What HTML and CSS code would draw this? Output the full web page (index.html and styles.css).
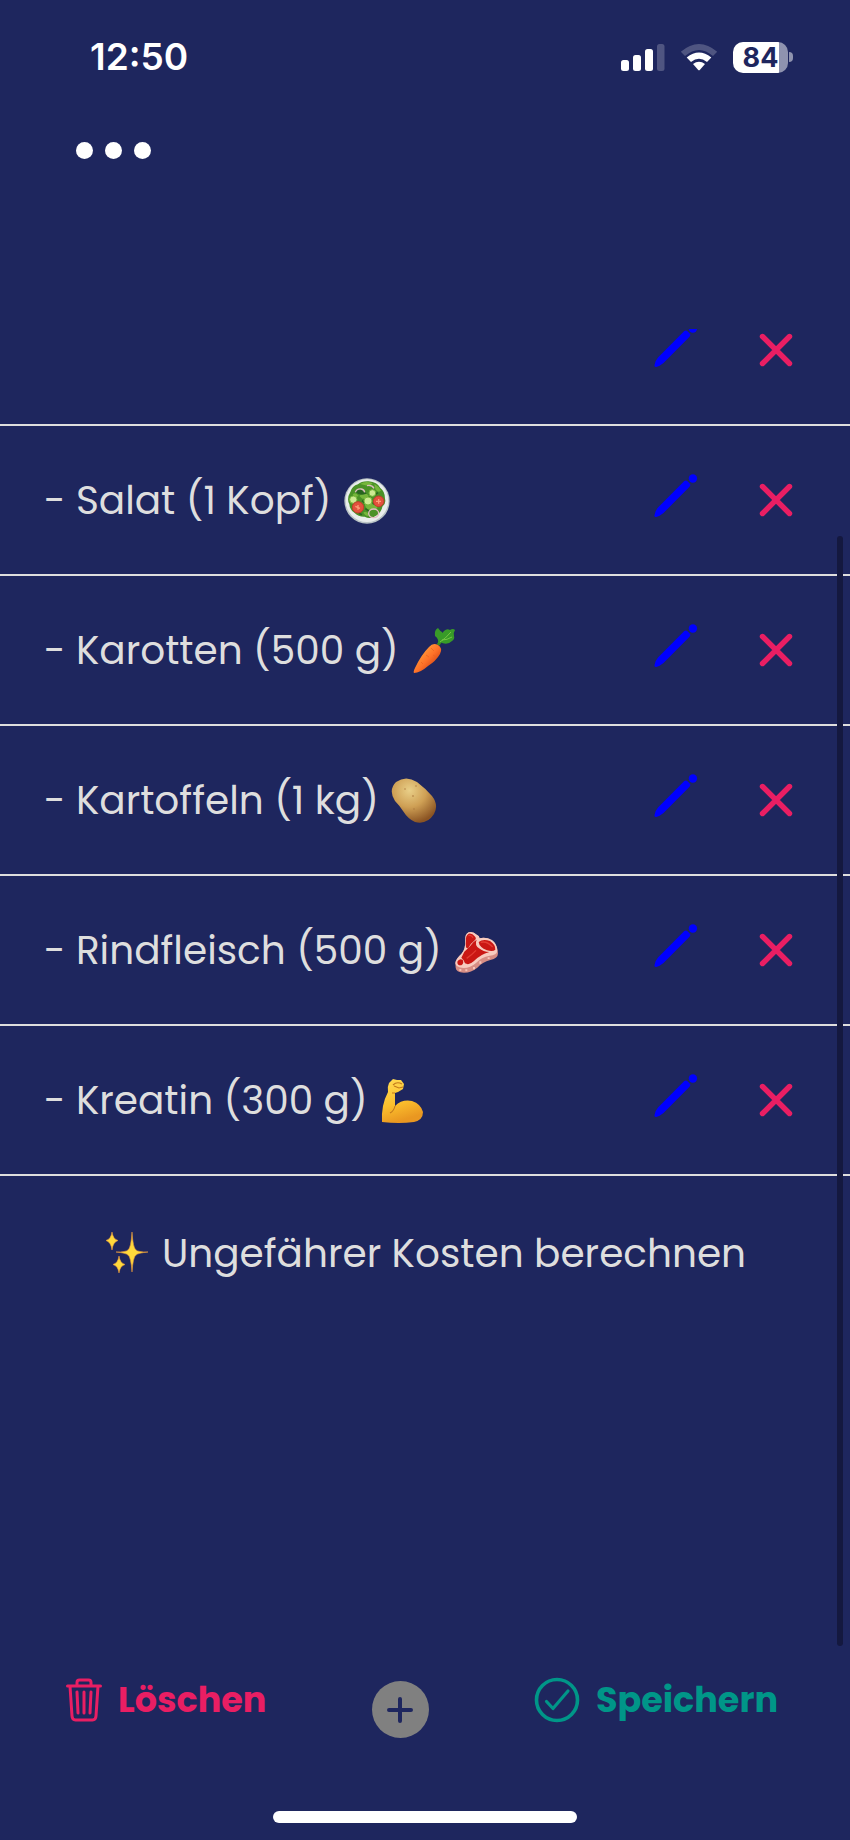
FILE: index.html
```html
<!DOCTYPE html>
<html lang="de">
<head>
<meta charset="utf-8">
<meta name="viewport" content="width=device-width, initial-scale=1">
<title>Einkaufsliste</title>
<link rel="stylesheet" href="styles.css">
</head>
<body>
<svg class="defs" aria-hidden="true">
  <symbol id="pencil" viewBox="0 0 44 44">
    <path fill="#00f" d="M29.800 7.600Q31.800 5.600 33.800 7.600L35.300 9.100Q37.300 11.100 35.300 13.100L9.500 39Q6 42 2 43Q0 43 .5 41Q1 37 4 33.500Z"/>
    <circle fill="#00f" cx="38.900" cy="4.500" r="4.200"/>
  </symbol>
  <symbol id="cross" viewBox="0 0 34 34">
    <path d="M3.500 3.500L30.500 30.500M30.500 3.500L3.500 30.500" stroke="#e91e63" stroke-width="5.400" stroke-linecap="round"/>
  </symbol>
</svg>
<div class="app">
  <header class="status">
    <time class="clock">12:50</time>
    <div class="indicators">
      <svg width="44" height="28" viewBox="0 0 44 28" role="img" aria-label="Mobilfunk">
        <g fill="#fff"><rect y="17" width="8" height="11" rx="2.500"/><rect x="12" y="12" width="8" height="16" rx="2.500"/><rect x="24" y="6" width="8" height="22" rx="2.500"/></g>
        <rect x="36" y="1" width="7.500" height="27" rx="2.500" fill="#fff" opacity=".22"/>
      </svg>
      <svg width="38" height="28" viewBox="0 0 38 28" role="img" aria-label="WLAN">
        <path d="M.8 8.800Q19-6.800 37.200 8.800L33 13Q19 .8 5 13Z" fill="#fff" opacity=".22"/>
        <path d="M6.700 14.500Q19 4.500 31.300 14.500L27 19Q19 12.500 11 19Z" fill="#fff"/>
        <path d="M13 21Q19 16.500 25 21L20 26.800Q19 27.800 18 26.800Z" fill="#fff"/>
      </svg>
      <div class="battery"><span class="level">84</span><span class="tip"></span></div>
    </div>
  </header>

  <button class="menu" aria-label="Menü"><span class="dot"></span><span class="dot"></span><span class="dot"></span></button>

  <main class="content">
    <ul class="list">
      <li class="item item-cut"><div class="row">
        <span class="name"></span>
        <button class="edit" aria-label="Bearbeiten"><svg width="44" height="44"><use href="#pencil"/></svg></button>
        <button class="remove" aria-label="Entfernen"><svg width="34" height="34"><use href="#cross"/></svg></button>
      </div></li>
      <li class="item"><div class="row">
        <span class="name">- Salat (1 Kopf)
          <svg class="emoji" viewBox="12 26 138 138" role="img" aria-label="Salat">
            <circle cx="81" cy="95" r="68" fill="#b9c3c5"/><circle cx="81" cy="94" r="64" fill="#e9edec"/>
            <path d="M31 68Q36 50 54 45Q64 35 86 36Q112 38 121 56Q135 66 135 88Q139 103 127 112Q124 130 108 139Q91 151 74 142Q56 143 43 130Q28 120 28 104Q19 88 31 68Z" fill="#4a9127"/>
            <path d="M60 44Q77 33 98 42Q90 52 76 48ZM103 44Q116 50 123 64Q114 72 106 60ZM58 80Q74 64 86 79Q80 90 67 88ZM75 108Q90 96 110 108Q118 122 96 120Q82 126 75 108ZM38 76Q46 66 56 80Q46 86 38 76ZM70 130Q78 122 88 136Q80 146 70 130Z" fill="#76b63b"/>
            <path d="M48 66Q62 56 76 72Q60 78 48 66ZM105 76L114 70M74 100L66 94M98 102Q112 110 124 108M76 118L88 126M56 132L66 136" fill="#286520" stroke="#286520" stroke-width="5"/>
            <g fill="#cdea92" stroke="#79b63d" stroke-width="3"><circle cx="40" cy="91" r="11"/><circle cx="84" cy="95" r="12"/><circle cx="97" cy="71" r="10"/></g>
            <g fill="#e3513d" stroke="#c43c2b" stroke-width="3"><circle cx="54" cy="114" r="17"/><circle cx="116" cy="96" r="16"/></g>
            <path d="M46 111L60 117M54 107V121M108 96H123M116 89V103" stroke="#ff9c79" stroke-width="4"/>
            <g fill="none" stroke="#e0bcc0" stroke-width="4"><path d="M46 69Q50 57 64 59Q73 61 74 69M81 49Q96 46 102 57"/><ellipse cx="101" cy="132" rx="15" ry="13"/></g>
          </svg></span>
        <button class="edit" aria-label="Bearbeiten"><svg width="44" height="44"><use href="#pencil"/></svg></button>
        <button class="remove" aria-label="Entfernen"><svg width="34" height="34"><use href="#cross"/></svg></button>
      </div></li>
      <li class="item"><div class="row">
        <span class="name">- Karotten (500 g)
          <svg class="emoji" viewBox="0 0 46 46" role="img" aria-label="Karotte">
            <defs><linearGradient id="car" x1=".2" y1=".3" x2=".7" y2=".8"><stop stop-color="#ff9b38"/><stop offset=".55" stop-color="#ff7128"/><stop offset="1" stop-color="#d84b17"/></linearGradient></defs>
            <path d="M27 17Q30 12 34 10" fill="none" stroke="#388b22" stroke-width="3"/>
            <path d="M27 15Q28 11 24 8Q23 2 27 0Q29 3 31 4Q34 9 29 15ZM29 14Q29 7 33 3Q36 0 39 2Q42 0 44 2Q42 5 43 8Q44 11 41 13Q36 18 29 14Z" fill="#389b28"/>
            <path d="M29 14Q34 11 40 4M31 12Q36 12 41 9" fill="none" stroke="#75c544"/>
            <path d="M18 19Q22 14 27 17Q32 20 29 26Q25 33 17 38Q9 45 3 45Q2 44 4 40Q10 27 18 19Z" fill="url(#car)"/>
            <path d="M20 20L23 23M15 27L18 29M10 34L12 36M25 29L22 27" stroke="#e9611f" stroke-width=".7"/>
          </svg></span>
        <button class="edit" aria-label="Bearbeiten"><svg width="44" height="44"><use href="#pencil"/></svg></button>
        <button class="remove" aria-label="Entfernen"><svg width="34" height="34"><use href="#cross"/></svg></button>
      </div></li>
      <li class="item"><div class="row">
        <span class="name">- Kartoffeln (1 kg)
          <svg class="emoji" viewBox="0 0 46 46" role="img" aria-label="Kartoffel">
            <defs><radialGradient id="pot" cx=".4" cy=".27" r=".75"><stop stop-color="#e9cf88"/><stop offset=".5" stop-color="#cfa055"/><stop offset="1" stop-color="#8b5423"/></radialGradient></defs>
            <path d="M5 4Q15-3 26 4Q34 10 41 18Q48 27 43 36Q36 47 24 44Q17 41 12 33Q8 27 4 23Q-3 12 5 4Z" fill="url(#pot)"/>
            <g fill="#a8743a"><circle cx="14" cy="11" r=".7"/><circle cx="25" cy="8" r=".7"/><circle cx="22" cy="18" r=".8"/><circle cx="38" cy="31" r=".7"/><circle cx="23" cy="31" r=".7"/></g>
          </svg></span>
        <button class="edit" aria-label="Bearbeiten"><svg width="44" height="44"><use href="#pencil"/></svg></button>
        <button class="remove" aria-label="Entfernen"><svg width="34" height="34"><use href="#cross"/></svg></button>
      </div></li>
      <li class="item"><div class="row">
        <span class="name">- Rindfleisch (500 g)
          <svg class="emoji" viewBox="16 26 138 138" role="img" aria-label="Rindfleisch">
            <path d="M50 62Q48 46 60 39Q73 35 84 46Q93 50 92 57Q113 52 130 64Q147 75 148 102Q148 117 125 122Q101 128 86 145Q66 161 45 160Q22 158 21 145L20 130Q22 118 38 104Q51 91 50 62Z" fill="#d78d84"/>
            <path d="M50 62Q48 46 60 39Q73 35 84 46Q93 50 92 57Q113 52 130 62Q145 72 146 95Q144 108 123 109Q98 113 82 131Q65 146 45 146Q22 145 20 132Q22 118 38 104Q51 91 50 62Z" fill="#f7cbbf"/>
            <path d="M52 64Q50 49 60 43Q71 41 78 51Q86 58 76 65Q63 75 58 87Q49 88 52 64ZM47 97Q64 83 74 69L84 61Q77 77 91 87Q104 98 122 98Q95 105 75 126Q61 139 49 132Q46 121 38 115ZM90 68Q103 57 124 65Q141 76 140 91Q133 98 115 93Q92 84 90 68ZM26 127Q31 116 42 121Q47 132 38 138Q25 139 26 127Z" fill="#ca1714"/>
            <path d="M59 49Q69 46 73 55M96 69Q115 64 132 83M54 117Q69 107 82 93" stroke="#e33b32" stroke-width="4" fill="none"/>
            <path d="M35 149V155M53 150V156M76 143V150M95 126V133M120 114V119" stroke="#f7c4b9" stroke-width="6"/>
          </svg></span>
        <button class="edit" aria-label="Bearbeiten"><svg width="44" height="44"><use href="#pencil"/></svg></button>
        <button class="remove" aria-label="Entfernen"><svg width="34" height="34"><use href="#cross"/></svg></button>
      </div></li>
      <li class="item"><div class="row">
        <span class="name">- Kreatin (300 g)
          <svg class="emoji" viewBox="0 0 46 46" role="img" aria-label="Bizeps">
            <defs><linearGradient id="arm" x2=".3" y2="1"><stop stop-color="#ffdc55"/><stop offset=".6" stop-color="#fcc02d"/><stop offset="1" stop-color="#e99721"/></linearGradient></defs>
            <path d="M9 5L13 1L17 2L21 2L24 6L23 11L18 14L15 15Q15 23 15 28Q22 21 32 23Q41 26 43 34Q43 42 34 44Q19 46 2 44Q1 27 8 14Q7 9 9 5Z" fill="url(#arm)"/>
            <path d="M13 7Q17 3 22 6M14 8L19 10L23 9M15 15L12 15M15 28Q14 33 10 35" fill="none" stroke="#c1781c" stroke-width="1.100"/>
          </svg></span>
        <button class="edit" aria-label="Bearbeiten"><svg width="44" height="44"><use href="#pencil"/></svg></button>
        <button class="remove" aria-label="Entfernen"><svg width="34" height="34"><use href="#cross"/></svg></button>
      </div></li>
    </ul>
    <button class="estimate">
      <svg class="emoji" viewBox="0 0 46 46" aria-hidden="true">
        <g fill="#ffd93b" stroke="#e8973e" stroke-width=".6">
          <path d="M28 2Q29 18 32 20Q34 22 44 22Q34 23 32 25Q29 27 28 42Q27 27 24 25Q22 23 12 22Q22 22 24 20Q27 18 28 2Z"/>
          <path d="M8 2Q9 9 14 10.500Q9 12 8 20Q7 12 2 10.500Q7 9 8 2Z"/>
          <path d="M15 26Q16 33 21 34.500Q16 36 15 43Q14 36 9 34.500Q14 33 15 26Z"/>
        </g>
      </svg>
      <span>Ungefährer Kosten berechnen</span>
    </button>
    <div class="scrollbar"></div>
  </main>

  <footer class="toolbar">
    <button class="action delete">
      <svg width="36" height="44" viewBox="0 0 36 44" fill="none" stroke="currentColor" stroke-width="3" stroke-linecap="round" stroke-linejoin="round" aria-hidden="true">
        <path d="M1.500 8H34.500M11 8V4.500Q11 2 13.500 2H22.500Q25 2 25 4.500V8M4 8L6 38Q6.200 42 9.500 42H26.500Q29.800 42 30 38L32 8"/>
        <path d="M11 14L12 35M18 14V35M25 14L24 35"/>
      </svg>
      <span>Löschen</span>
    </button>
    <button class="add" aria-label="Hinzufügen">
      <svg width="26" height="26" viewBox="0 0 26 26" fill="none" stroke="currentColor" stroke-width="4" stroke-linecap="round"><path d="M13 2V24M2 13H24"/></svg>
    </button>
    <button class="action save">
      <svg width="46" height="46" viewBox="0 0 46 46" fill="none" stroke="currentColor" stroke-width="3.600" stroke-linecap="round" stroke-linejoin="round" aria-hidden="true">
        <circle cx="23" cy="23" r="20.500"/><path stroke-width="3.200" d="M12.500 24.500L19 31.500L34 14"/>
      </svg>
      <span>Speichern</span>
    </button>
  </footer>
  <div class="home"></div>
</div>
</body>
</html>
```
FILE: styles.css
```css
* { box-sizing: border-box; }

body {
  margin: 0;
  background: #1e265e;
  color: #dedede;
  font-family: Poppins, Inter, "Open Sans", sans-serif;
}

button {
  padding: 0;
  border: 0;
  background: none;
  color: inherit;
  font: inherit;
  cursor: pointer;
}

svg { display: block; }
.defs { position: absolute; width: 0; height: 0; }

.app {
  display: flex;
  flex-direction: column;
  min-height: 100vh;
}

.status {
  display: flex;
  align-items: center;
  justify-content: space-between;
  height: 114px;
  padding: 0 57px 0 90px;
  color: #fff;
}

.clock { font: 600 37px/44px Inter, sans-serif; }

.indicators {
  display: flex;
  align-items: center;
  gap: 15px;
}

.battery {
  display: flex;
  align-items: center;
  gap: 1px;
}

.level {
  width: 55px;
  height: 31px;
  border-radius: 10px;
  background: linear-gradient(90deg, #fff 83%, #8f93af 83%);
  color: #1e265e;
  font: 700 27px/31px Inter, sans-serif;
  text-align: center;
}

.tip {
  width: 4px;
  height: 10px;
  border-radius: 0 5px 5px 0;
  background: #8f93af;
}

.menu {
  display: flex;
  align-self: flex-start;
  gap: 12px;
  margin: 28px 0 0 76px;
}

.dot {
  width: 17px;
  height: 17px;
  border-radius: 50%;
  background: #fff;
}

.content {
  position: relative;
  display: flex;
  flex: 1;
  flex-direction: column;
  margin-top: 170px;
}

.list {
  margin: 0;
  padding: 0;
  list-style: none;
}

.item { border-bottom: 2px solid #dedede; }

.item-cut {
  display: flex;
  flex-direction: column;
  justify-content: flex-end;
  height: 97px;
  overflow: hidden;
}

.row {
  display: flex;
  flex-shrink: 0;
  align-items: center;
  height: 148px;
  padding: 0 57px 0 44px;
}

.name {
  display: flex;
  flex: 1;
  align-items: center;
  gap: 12px;
  padding-top: 2px;
  font-size: 39px;
  line-height: 60px;
}

.emoji {
  flex: none;
  width: 46px;
  height: 46px;
}

.edit { padding-bottom: 8px; }
.remove { margin-left: 61px; }

.estimate {
  display: flex;
  align-items: center;
  align-self: center;
  gap: 12px;
  height: 154px;
  font-size: 39px;
}

.scrollbar {
  position: absolute;
  top: 207px;
  right: 7px;
  bottom: 25px;
  width: 6px;
  border-radius: 3px;
  background: #14183f;
}

.toolbar {
  display: flex;
  align-items: flex-start;
  justify-content: space-between;
  height: 134px;
  padding: 6px 72px 0 66px;
}

.action {
  display: flex;
  align-items: center;
  gap: 16px;
  height: 46px;
  font-size: 35px;
  font-weight: 700;
  line-height: 46px;
}

.delete { color: #e91e63; }
.save { color: #009688; }

.add {
  display: grid;
  place-items: center;
  width: 57px;
  height: 57px;
  margin-top: 4px;
  border-radius: 50%;
  background: #808080;
  color: #1e265e;
}

.home {
  width: 304px;
  height: 12px;
  margin: 6px auto 17px;
  border-radius: 6px;
  background: #fff;
}
```
